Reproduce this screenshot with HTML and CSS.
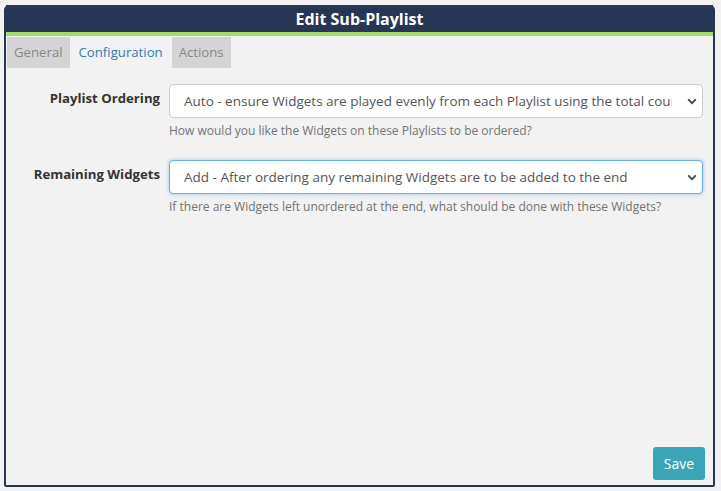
FILE: index.html
```html
<!DOCTYPE html>
<html>
<head>
<meta charset="utf-8">
<link rel="stylesheet" href="styles.css">
</head>
<body>
<div class="dialog">
  <div class="header">Edit Sub-Playlist</div>
  <div class="body">
    <div class="tabs">
      <div class="tab">General</div>
      <div class="tab active">Configuration</div>
      <div class="tab">Actions</div>
    </div>
    <div class="form">
      <div class="row">
        <label class="label">Playlist Ordering</label>
        <div class="field">
          <div class="select-wrap">
            <select class="control">
              <option>Auto - ensure Widgets are played evenly from each Playlist using the total count of Widgets</option>
            </select>
            <svg class="chev" width="10" height="7" viewBox="0 0 10 7"><path d="M1.2 1.4 L5 5.2 L8.8 1.4" fill="none" stroke="#444" stroke-width="1.8"/></svg>
          </div>
          <div class="help">How would you like the Widgets on these Playlists to be ordered?</div>
        </div>
      </div>
      <div class="row">
        <label class="label">Remaining Widgets</label>
        <div class="field">
          <div class="select-wrap">
            <select class="control focus">
              <option>Add - After ordering any remaining Widgets are to be added to the end</option>
            </select>
            <svg class="chev" width="10" height="7" viewBox="0 0 10 7"><path d="M1.2 1.4 L5 5.2 L8.8 1.4" fill="none" stroke="#444" stroke-width="1.8"/></svg>
          </div>
          <div class="help">If there are Widgets left unordered at the end, what should be done with these Widgets?</div>
        </div>
      </div>
    </div>
    <div class="footer">
      <button class="save">Save</button>
    </div>
  </div>
</div>
</body>
</html>
```
FILE: styles.css
```css
html, body {
  margin: 0;
  padding: 0;
  background: #f2f2f2;
  font-family: "Open Sans", "Liberation Sans", sans-serif;
  font-size: 13.5px;
  color: #333;
}
.dialog {
  margin: 5px 6px 0 4px;
  width: 707px;
  height: 478px;
  border: 2px solid #283655;
  border-radius: 5px 5px 2px 2px;
  background: #f2f2f2;
  display: flex;
  flex-direction: column;
}
.header {
  height: 25px;
  margin-top: -2px;
  padding-top: 2px;
  background: #283655;
  color: #fff;
  font-weight: bold;
  font-size: 16px;
  text-align: center;
  line-height: 24px;
  border-bottom: 4px solid #a6d96a;
  box-sizing: content-box;
}
.body {
  flex: 1;
  display: flex;
  flex-direction: column;
  padding: 1px 8px 5px 1px;
}
.tabs {
  display: flex;
  height: 31px;
}
.tab {
  padding: 0 7px;
  line-height: 31px;
  background: #d4d4d4;
  color: #888;
  font-size: 13.2px;
}
.tab.active {
  background: transparent;
  color: #337ab7;
  padding: 0 9px;
}
.form {
  flex: 1;
  padding-top: 16px;
  display: flex;
  flex-direction: column;
  gap: 21px;
}
.row {
  display: flex;
  align-items: flex-start;
}
.label {
  width: 153px;
  text-align: right;
  font-weight: bold;
  font-size: 13.2px;
  padding-top: 5px;
  padding-right: 9px;
}
.field {
  flex: 1;
  min-width: 0;
}
.select-wrap {
  position: relative;
  width: 534px;
}
.control {
  display: block;
  width: 534px;
  height: 34px;
  padding: 0 30px 0 14px;
  border: 1px solid #ccc;
  border-radius: 4px;
  background: #fff;
  font-family: inherit;
  font-size: 13.5px;
  color: #555;
  appearance: none;
  -webkit-appearance: none;
  outline: none;
}
.chev {
  position: absolute;
  right: 6px;
  top: 14px;
  pointer-events: none;
}
.control.focus {
  border-color: #66afe9;
  box-shadow: 0 0 4px rgba(102, 175, 233, 0.6);
}
.help {
  margin-top: 4px;
  font-size: 12px;
  color: #737373;
}
.footer {
  display: flex;
  justify-content: flex-end;
}
.save {
  width: 52px;
  height: 33px;
  border: none;
  border-radius: 3px;
  background: #3ba5b8;
  color: #fff;
  font-family: inherit;
  font-size: 14px;
  padding: 0;
}
```
